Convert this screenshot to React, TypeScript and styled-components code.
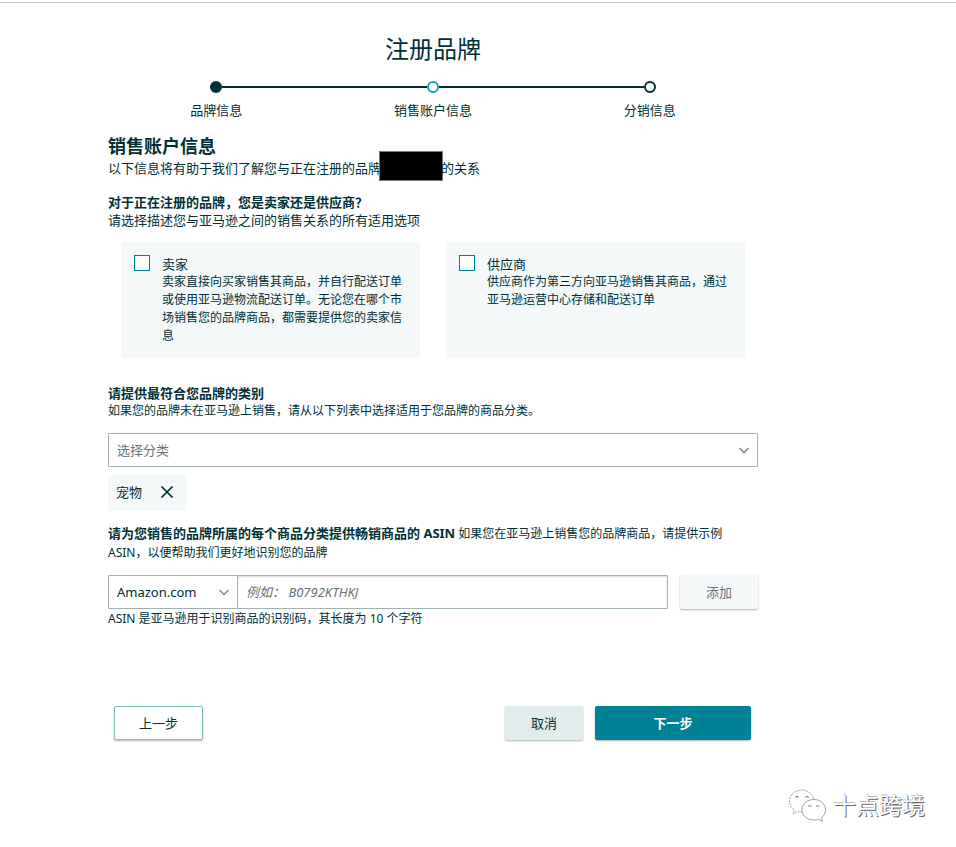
import React from "react";
import styled, { createGlobalStyle, css } from "styled-components";

const ink = "#002f36";
const teal = "#008296";
const line = "#a2b2b3";
const pale = "#f4f8f9";

const GlobalStyle = createGlobalStyle`
  *, *::before, *::after { box-sizing: border-box; }
  body {
    margin: 0;
    background: #fff;
    color: ${ink};
    font-family: "Noto Sans", "Noto Sans CJK SC", sans-serif;
    font-size: 13px;
    line-height: 18px;
    text-spacing-trim: space-all;
  }
  button, input, select { font: inherit; color: inherit; }
  h1, h2, h3, p, ol, fieldset { margin: 0; padding: 0; border: 0; }
`;

const Page = styled.div`
  margin-top: 2px;
  border-top: 1px solid #c8c8c8;
`;

const Main = styled.main`
  max-width: 866px;
  padding: 28px 108px 0;
`;

const Title = styled.h1`
  font-size: 24px;
  font-weight: 400;
  line-height: 36px;
  text-align: center;
`;

const Steps = styled.ol`
  display: grid;
  grid-template-columns: repeat(3, 1fr);
  margin-top: 14px;
  list-style: none;
`;

const Step = styled.li`
  text-align: center;
`;

const Rail = styled.div`
  display: flex;
  align-items: center;
  margin-bottom: 8px;
`;

const Segment = styled.span<{ $hidden?: boolean }>`
  flex: 1;
  height: 2px;
  background: ${(p) => (p.$hidden ? "transparent" : ink)};
`;

const Dot = styled.span<{ $state: "done" | "current" | "next" }>`
  width: 12px;
  height: 12px;
  border: 2px solid ${(p) => (p.$state === "current" ? "#17a2b8" : ink)};
  border-radius: 50%;
  background: ${(p) => (p.$state === "done" ? ink : "#fff")};
`;

const SectionTitle = styled.h2`
  margin-top: 14px;
  font-size: 18px;
  font-weight: 700;
  line-height: 26px;
`;

const Redacted = styled.span`
  display: inline-block;
  width: 64px;
  height: 30px;
  margin: -12px -2px -4px;
  border: 1px solid #777;
  background: #000;
  vertical-align: middle;
`;

const Question = styled.h3`
  font-size: 13px;
  font-weight: 700;
`;

const Group = styled.section<{ $gap: number }>`
  margin-top: ${(p) => p.$gap}px;
`;

const Small = styled.p`
  font-size: 12px;
`;

const Helper = styled(Small)`
  line-height: 20px;
`;

const Intro = styled.p`
  height: 18px;
  white-space: nowrap;
`;

const Cards = styled.div`
  display: grid;
  grid-template-columns: 1fr 1fr;
  gap: 26px;
  margin: 13px 13px 0;
`;

const Card = styled.label`
  display: flex;
  gap: 12px;
  padding: 13px;
  background: ${pale};
`;

const Check = styled.input`
  appearance: none;
  flex: none;
  width: 16px;
  height: 16px;
  margin: 0;
  border: 1px solid ${teal};
  background: #fff;
  &:checked { background: ${teal}; }
`;

const CardName = styled.span`
  display: block;
`;

const CardText = styled.span`
  display: block;
  font-size: 12px;
`;

const SelectWrap = styled.div<{ $width?: number }>`
  display: grid;
  flex: none;
  align-items: center;
  width: ${(p) => (p.$width ? p.$width + "px" : "100%")};
  & > * { grid-area: 1 / 1; }
  & > svg { justify-self: end; margin-right: 8px; pointer-events: none; }
`;

const field = css`
  width: 100%;
  height: 34px;
  padding: 0 8px;
  border: 1px solid ${line};
  border-radius: 1px;
  background: #fff;
`;

const Select = styled.select<{ $muted?: boolean }>`
  ${field}
  appearance: none;
  color: ${(p) => (p.$muted ? "#6b7374" : ink)};
`;

const AsinInput = styled.input`
  ${field}
  flex: 1;
  min-width: 0;
  margin-left: -1px;
  box-shadow: inset 0 1px 2px rgba(0, 0, 0, 0.15);
  &::placeholder { color: #6b7374; font-style: italic; opacity: 1; }
`;

const Tag = styled.div`
  display: inline-flex;
  align-items: center;
  gap: 18px;
  height: 36px;
  margin-top: 8px;
  padding: 0 12px 2px 8px;
  background: ${pale};
`;

const IconButton = styled.button`
  display: flex;
  padding: 0;
  border: 0;
  background: none;
`;

const AsinText = styled.label`
  display: block;
  font-size: 12px;
  line-height: 19px;
  & > strong { font-size: 13px; font-weight: 700; }
`;

const FieldRow = styled.div`
  display: flex;
  margin-top: 13px;
`;

const Button = styled.button<{ $kind: "outline" | "soft" | "primary" | "disabled"; $width: number }>`
  flex: none;
  width: ${(p) => p.$width}px;
  height: 34px;
  padding: 0;
  border: 0;
  border-radius: 2px;
  box-shadow: 0 1px 2px rgba(0, 0, 0, 0.3);
  ${(p) => p.$kind === "outline" && css`border: 1px solid #7fc1bb; background: #fff;`}
  ${(p) => p.$kind === "soft" && css`background: #e3eced;`}
  ${(p) => p.$kind === "primary" && css`background: ${teal}; color: #fff; font-weight: 700;`}
  ${(p) => p.$kind === "disabled" && css`background: ${pale}; color: #6b7374; margin-left: 12px;`}
`;

const Actions = styled.div`
  display: flex;
  gap: 12px;
  margin-top: 77px;
  padding: 0 7px 0 6px;
  & > :first-child { margin-right: auto; }
`;

const Watermark = styled.footer`
  display: flex;
  justify-content: flex-end;
  align-items: center;
  gap: 7px;
  margin-top: 47px;
  padding-right: 31px;
  color: #fff;
  font-size: 23px;
  line-height: 36px;
  text-shadow: 1px 1px 0 #666, 0 -1px 0 #bbb;
`;

const Chevron = () => (
  <svg width="12" height="12" viewBox="0 0 12 12" fill="none" stroke="#879596" strokeWidth="1.7" aria-hidden="true">
    <path d="M1.5 4 6 8.5 10.5 4" />
  </svg>
);

const ChatLogo = () => (
  <svg width="38" height="34" viewBox="0 0 38 34" fill="#fff" stroke="#8a8a8a" strokeWidth="0.8" aria-hidden="true">
    <path d="M25.5 11C24 5 18.5 1.5 12.5 2.2 6 2.8 1.5 7.3 1.5 13c0 4 2 7 5 9l-1.500 4 5-2.400c1.500.5 3 .6 5 .5" strokeDasharray="2 1" />
    <path d="M26 11.5c-7 0-12 4.500-12 10.300S19 32 26 32c1.700 0 3-.2 4.500-.7l4 2-1-3.500c2.500-2 4-4.500 4-8C37.500 16 32.500 11.5 26 11.500Z" />
    <path d="M7 9.500q2-2.500 4 0M17 9.500q2-2.500 4 0M20 18.500q1.700-2.200 3.400 0M28 18.500q1.700-2.200 3.400 0" fill="none" stroke="#555" />
  </svg>
);

const steps = [
  { name: "品牌信息", state: "done" },
  { name: "销售账户信息", state: "current" },
  { name: "分销信息", state: "next" },
] as const;

const roles = [
  {
    name: "卖家",
    text: "卖家直接向买家销售其商品，并自行配送订单或使用亚马逊物流配送订单。无论您在哪个市场销售您的品牌商品，都需要提供您的卖家信息",
  },
  { name: "供应商", text: "供应商作为第三方向亚马逊销售其商品，通过亚马逊运营中心存储和配送订单" },
];

export default function App() {
  return (
    <Page lang="zh-CN">
      <GlobalStyle />
      <Main>
        <Title>注册品牌</Title>
        <Steps>
          {steps.map((s, i) => (
            <Step key={s.name} aria-current={s.state === "current" ? "step" : undefined}>
              <Rail>
                <Segment $hidden={i === 0} />
                <Dot $state={s.state} />
                <Segment $hidden={i === steps.length - 1} />
              </Rail>
              {s.name}
            </Step>
          ))}
        </Steps>

        <SectionTitle>销售账户信息</SectionTitle>
        <Intro>
          以下信息将有助于我们了解您与正在注册的品牌
          <Redacted />
          的关系
        </Intro>

        <Group $gap={16}>
          <Question>对于正在注册的品牌，您是卖家还是供应商？</Question>
          <p>请选择描述您与亚马逊之间的销售关系的所有适用选项</p>
          <Cards>
            {roles.map((r) => (
              <Card key={r.name}>
                <Check type="checkbox" />
                <span>
                  <CardName>{r.name}</CardName>
                  <CardText>{r.text}</CardText>
                </span>
              </Card>
            ))}
          </Cards>
        </Group>

        <Group $gap={26}>
          <Question id="category">请提供最符合您品牌的类别</Question>
          <Small>如果您的品牌未在亚马逊上销售，请从以下列表中选择适用于您品牌的商品分类。</Small>
          <FieldRow>
            <SelectWrap>
              <Select $muted aria-labelledby="category">
                <option>选择分类</option>
              </Select>
              <Chevron />
            </SelectWrap>
          </FieldRow>
          <Tag>
            宠物
            <IconButton type="button" aria-label="移除宠物">
              <svg width="14" height="14" viewBox="0 0 14 14" stroke={ink} strokeWidth="1.7" aria-hidden="true">
                <path d="M1.5 1.5l11 11M12.5 1.5l-11 11" />
              </svg>
            </IconButton>
          </Tag>
        </Group>

        <Group $gap={13}>
          <AsinText htmlFor="asin">
            <strong>请为您销售的品牌所属的每个商品分类提供畅销商品的 ASIN</strong>{" "}
            如果您在亚马逊上销售您的品牌商品，请提供示例 ASIN，以便帮助我们更好地识别您的品牌
          </AsinText>
          <FieldRow>
            <SelectWrap $width={130}>
              <Select aria-label="商城">
                <option>Amazon.com</option>
              </Select>
              <Chevron />
            </SelectWrap>
            <AsinInput id="asin" placeholder="例如： B0792KTHKJ" />
            <Button type="button" $kind="disabled" $width={78} disabled>添加</Button>
          </FieldRow>
          <Helper>ASIN 是亚马逊用于识别商品的识别码，其长度为 10 个字符</Helper>
        </Group>

        <Actions>
          <Button type="button" $kind="outline" $width={89}>上一步</Button>
          <Button type="button" $kind="soft" $width={78}>取消</Button>
          <Button type="button" $kind="primary" $width={156}>下一步</Button>
        </Actions>
      </Main>
      <Watermark>
        <ChatLogo />
        十点跨境
      </Watermark>
    </Page>
  );
}
